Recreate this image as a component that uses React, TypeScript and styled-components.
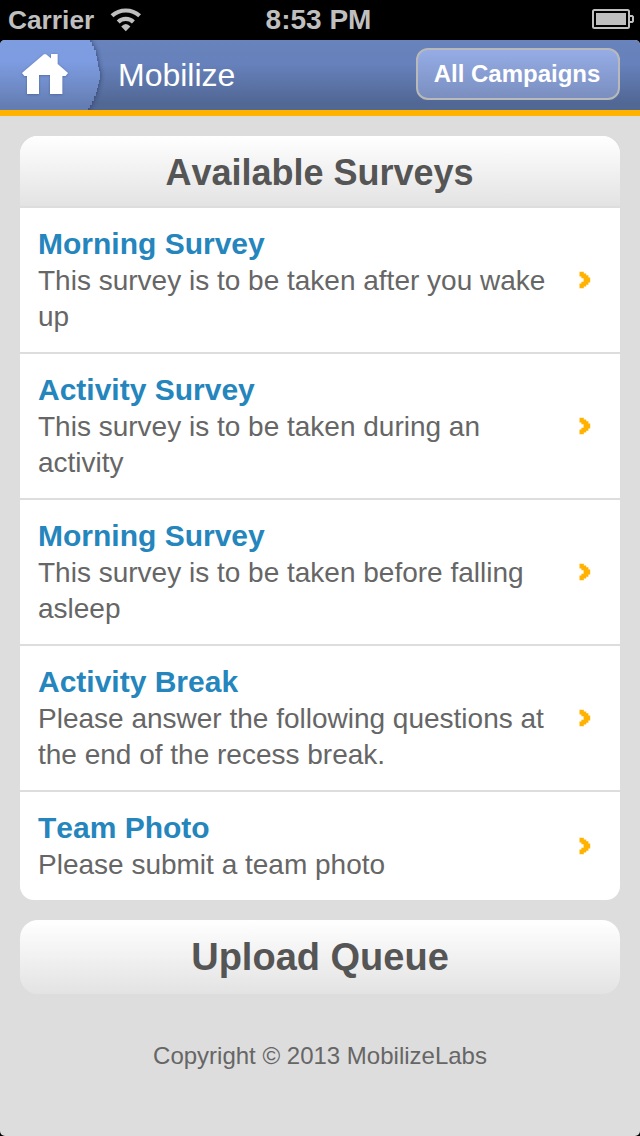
import React from 'react';
import styled, { createGlobalStyle } from 'styled-components';

const Global = createGlobalStyle`
  * { box-sizing: border-box; }
  body { margin: 0; background: #000; font-family: "Liberation Sans", Arial, sans-serif; font-kerning: none; }
  h1, h2, h3, p, ul { margin: 0; padding: 0; }
`;

const Screen = styled.div`
  width: 640px;
  height: 1136px;
  display: flex;
  flex-direction: column;
  background: #000;
  overflow: hidden;
`;

const StatusBar = styled.div`
  height: 40px;
  flex: none;
  display: grid;
  grid-template-columns: 1fr auto 1fr;
  align-items: center;
  padding: 0 6px 0 8px;
  color: #bfbfbf;
  font-weight: bold;
`;

const Carrier = styled.div`
  display: flex;
  align-items: center;
  gap: 16px;
  font-size: 26.3px;
  line-height: 40px;
`;

const Clock = styled.div`
  padding-right: 5px;
  font-size: 28px;
  line-height: 40px;
`;

const Battery = styled.svg`
  justify-self: end;
  margin-top: -2px;
`;

const Page = styled.div`
  flex: 1;
  display: flex;
  flex-direction: column;
  background: #ddd;
  border-radius: 5px;
  overflow: hidden;
`;

const NavBar = styled.header`
  height: 76px;
  flex: none;
  display: flex;
  align-items: center;
  padding-right: 20px;
  border-bottom: 6px solid #ffb200;
  background: linear-gradient(#6983bc 0%, #6681bb 35%, #516794 90%, #516794 100%);
`;

const HomeButton = styled.svg`
  flex: none;
`;

const NavTitle = styled.h1`
  flex: 1;
  margin-left: 12px;
  color: #fff;
  font-size: 32px;
  font-weight: normal;
  line-height: 70px;
`;

const NavButton = styled.button`
  width: 204px;
  height: 52px;
  padding: 0 2px 0 0;
  margin-top: -2px;
  border: 2px solid #b9b9b9;
  border-radius: 12px;
  background: linear-gradient(#95ace6, #7a8ebf);
  color: #fff;
  font: bold 24px "Liberation Sans", Arial, sans-serif;
`;

const Content = styled.main`
  display: flex;
  flex-direction: column;
  gap: 20px;
  padding: 20px;
`;

const Card = styled.section`
  border-radius: 18px 18px 14px 14px;
  background: #fff;
  overflow: hidden;
`;

const CardTitle = styled.h2`
  height: 70px;
  padding-right: 1px;
  background: linear-gradient(#fff, #e3e3e3);
  color: #555;
  font-size: 36px;
  line-height: 73px;
  text-align: center;
`;

const SurveyRow = styled.li`
  display: flex;
  align-items: center;
  justify-content: space-between;
  padding: 18px 29px 18px 18px;
  border-top: 2px solid #ddd;
  list-style: none;
`;

const SurveyText = styled.div`
  width: 524px;
`;

const SurveyName = styled.h3`
  color: #2585bd;
  font-size: 30px;
  line-height: 36px;
`;

const SurveyInfo = styled.p`
  padding-top: 1px;
  margin-bottom: -1px;
  color: #666;
  font-size: 28px;
  line-height: 36px;
`;

const QueueButton = styled.button`
  height: 74px;
  padding: 0;
  border: 0;
  border-radius: 18px;
  background: linear-gradient(#fff, #e3e3e3);
  color: #555;
  font: bold 38px "Liberation Sans", Arial, sans-serif;
`;

const Footer = styled.footer`
  padding-top: 22px;
  color: #666;
  font-size: 24px;
  line-height: 40px;
  text-align: center;
`;

const surveys = [
  { name: 'Morning Survey', info: 'This survey is to be taken after you wake up' },
  { name: 'Activity Survey', info: 'This survey is to be taken during an activity' },
  { name: 'Morning Survey', info: 'This survey is to be taken before falling asleep' },
  { name: 'Activity Break', info: 'Please answer the following questions at the end of the recess break.' },
  { name: 'Team Photo', info: 'Please submit a team photo' },
];

const WifiIcon = () => (
  <svg width="32" height="24" viewBox="0 0 32 24" fill="none" stroke="#bfbfbf" strokeWidth="4.2">
    <path d="M2 7.8A20.6 20.6 0 0 1 29.6 7.8" />
    <path d="M8.2 14A10.9 10.9 0 0 1 23.4 14" />
    <path d="M11.2 18.4Q15.8 13.4 20.4 18.4L15.8 23.2z" fill="#bfbfbf" stroke="none" />
  </svg>
);

const Chevron = () => (
  <svg width="12" height="18" viewBox="-1 -1 12 18" fill="#ffb200">
    <path d="M-.5 -.2H3.8V1.5H6.2V3.3H8.4V5.5H10.2V10.5H8.4V12.7H6.2V14.5H3.8V16.2H-.5V11.5H1.4V9.8H3.6V6.2H1.4V4.5H-.5z" />
  </svg>
);

const Home = () => (
  <HomeButton width="106" height="70" viewBox="0 0 106 70">
    <defs>
      <linearGradient id="tab" x1="0" y1="0" x2="0" y2="1">
        <stop offset="0" stopColor="#7f9de0" />
        <stop offset="0.35" stopColor="#7d9ce1" />
        <stop offset="0.85" stopColor="#647db2" />
        <stop offset="1" stopColor="#647db2" />
      </linearGradient>
      <filter id="soft" x="-20%" y="-20%" width="140%" height="140%">
        <feDropShadow dx="1" dy="0" stdDeviation="2.2" floodColor="#26365c" floodOpacity="0.6" />
      </filter>
      <filter id="glow" x="-20%" y="-20%" width="140%" height="140%">
        <feDropShadow dx="0" dy="0.5" stdDeviation="1" floodColor="#34466e" floodOpacity="0.6" />
      </filter>
    </defs>
    <path
      d="M-10 -10H90V2H92V6H94V10H96V16H97V21H98V27H99V31H100V40H99V44H98V48H97V52H96V56H94V61H92V65H90V68H88V80H-10z"
      fill="url(#tab)"
      filter="url(#soft)"
    />
    <path
      d="M22 33L44 14.2L46 14.2L51 18.4V14H57.6V24L68 33L65.5 36H62.3V54H50V35H39V54H27V36H24.5z"
      fill="#fff"
      filter="url(#glow)"
    />
  </HomeButton>
);

export default function App() {
  return (
    <Screen>
      <Global />
      <StatusBar>
        <Carrier>
          Carrier
          <WifiIcon />
        </Carrier>
        <Clock>8:53 PM</Clock>
        <Battery width="42" height="20" viewBox="0 0 42 20">
          <rect x="1" y="1" width="36" height="18" rx="1.5" fill="none" stroke="#bfbfbf" strokeWidth="2" />
          <rect x="4" y="4" width="30" height="12" fill="#bfbfbf" />
          <path d="M38 7h2.2l.8.8v4.4l-.8.8H38" fill="none" stroke="#bfbfbf" strokeWidth="2" />
        </Battery>
      </StatusBar>
      <Page>
        <NavBar>
          <Home />
          <NavTitle>Mobilize</NavTitle>
          <NavButton>All Campaigns</NavButton>
        </NavBar>
        <Content>
          <Card>
            <CardTitle>Available Surveys</CardTitle>
            <ul>
              {surveys.map((survey, i) => (
                <SurveyRow key={i}>
                  <SurveyText>
                    <SurveyName>{survey.name}</SurveyName>
                    <SurveyInfo>{survey.info}</SurveyInfo>
                  </SurveyText>
                  <Chevron />
                </SurveyRow>
              ))}
            </ul>
          </Card>
          <QueueButton>Upload Queue</QueueButton>
          <Footer>Copyright © 2013 MobilizeLabs</Footer>
        </Content>
      </Page>
    </Screen>
  );
}
